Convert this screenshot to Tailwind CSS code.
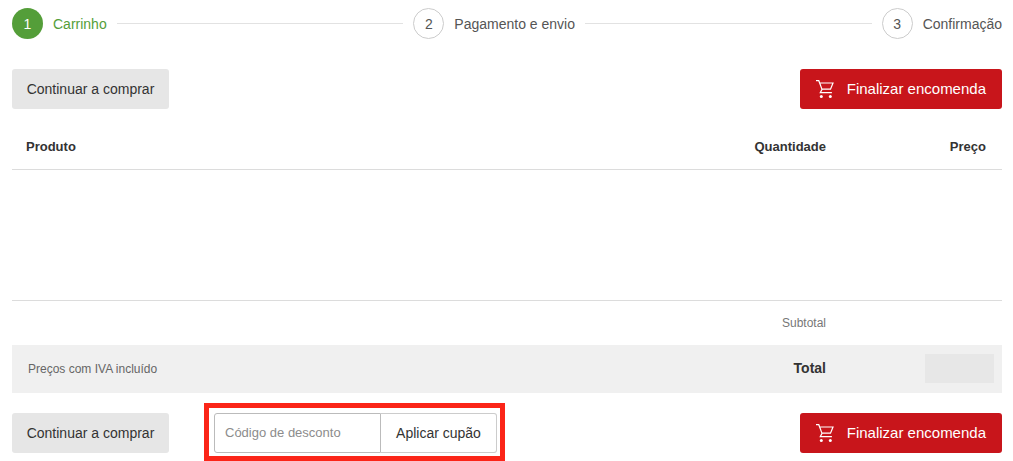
<!DOCTYPE html>
<html lang="pt">
<head>
  <meta charset="UTF-8" />
  <meta name="viewport" content="width=device-width, initial-scale=1.0"/>
  <title>Carrinho</title>
  <script src="https://cdn.jsdelivr.net/npm/@tailwindcss/browser@4"></script>
</head>
<body class="bg-white font-['Liberation_Sans',Arial,sans-serif] text-sm text-[#333333]">
  <main class="w-full pl-3 pr-[11px] pt-2">

    <!-- Steps -->
    <ol class="flex items-center gap-[10px] text-[#555555]">
      <li class="flex items-center gap-[10px] text-[#549e39]">
        <span class="flex size-[31px] items-center justify-center rounded-full bg-[#549e39] text-white">1</span>
        <span>Carrinho</span>
      </li>
      <li class="h-px flex-1 bg-[#e2e2e2]" aria-hidden="true"></li>
      <li class="flex items-center gap-[10px]">
        <span class="flex size-[31px] items-center justify-center rounded-full border border-[#cccccc]">2</span>
        <span>Pagamento e envio</span>
      </li>
      <li class="h-px flex-1 bg-[#e2e2e2]" aria-hidden="true"></li>
      <li class="flex items-center gap-[10px]">
        <span class="flex size-[31px] items-center justify-center rounded-full border border-[#cccccc]">3</span>
        <span>Confirmação</span>
      </li>
    </ol>

    <!-- Top actions -->
    <div class="mt-[30px] flex items-center justify-between">
      <button type="button" class="h-10 w-[157px] rounded-[3px] bg-[#e6e6e6] hover:bg-[#dddddd]">Continuar a comprar</button>
      <button type="button" class="flex h-10 w-[202px] items-center justify-between rounded-[3px] bg-[#c8151b] px-4 text-[15px] text-white hover:bg-[#b01217]">
        <svg class="size-[18px]" viewBox="0 0 18 18" fill="none" stroke="currentColor" stroke-width="1.2">
          <path d="M0 .7h2.8L6 9.4l-1.7 3.2h11.6M3.8 3h13.2l-2.5 6.2H6" />
          <circle cx="5.3" cy="16.4" r="1.5" fill="currentColor" stroke="none" />
          <circle cx="14.3" cy="16.4" r="1.5" fill="currentColor" stroke="none" />
        </svg>
        <span>Finalizar encomenda</span>
      </button>
    </div>

    <!-- Cart -->
    <table class="mt-[14px] w-full border-collapse">
      <thead>
        <tr class="h-[46px] border-b border-[#dcdcdc] text-[13px]">
          <th class="px-[14px] pt-1 text-left">Produto</th>
          <th class="w-40 px-4 pt-1 text-right">Quantidade</th>
          <th class="w-40 px-4 pt-1 text-right">Preço</th>
        </tr>
      </thead>
      <tbody>
        <tr class="h-[131px] border-b border-[#dcdcdc]">
          <td colspan="3"></td>
        </tr>
      </tbody>
      <tfoot>
        <tr class="h-[45px] text-xs text-[#777777]">
          <td></td>
          <td class="px-4 text-right">Subtotal</td>
          <td></td>
        </tr>
        <tr class="h-12 bg-[#f0f0f0]">
          <td class="px-4 text-xs text-[#666666]">Preços com IVA incluído</td>
          <td class="px-4 pb-[2px] text-right font-bold">Total</td>
          <td class="px-2 pb-[2px]"><div class="ml-auto h-[29px] w-[69px] bg-[#e7e7e7]"></div></td>
        </tr>
      </tfoot>
    </table>

    <!-- Bottom actions -->
    <div class="mt-[10px] flex items-start">
      <button type="button" class="mt-[10px] h-10 w-[157px] rounded-[3px] bg-[#e6e6e6] hover:bg-[#dddddd]">Continuar a comprar</button>
      <div class="ml-[35px] border-[5px] border-[#fb2518] pt-[5px] pr-[3px] pb-[3px] pl-[5px]">
        <form class="flex h-10">
          <input type="text" name="coupon" aria-label="Código de desconto" placeholder="Código de desconto" class="w-[167px] rounded-l-[3px] border border-[#bbbbbb] px-[10px] text-[13px] placeholder:text-[#8c8c8c]" />
          <button type="button" class="w-[116px] rounded-r-[3px] border border-l-0 border-[#cccccc] hover:bg-[#f5f5f5]">Aplicar cupão</button>
        </form>
      </div>
      <button type="button" class="mt-[10px] ml-auto flex h-10 w-[202px] items-center justify-between rounded-[3px] bg-[#c8151b] px-4 text-[15px] text-white hover:bg-[#b01217]">
        <svg class="size-[18px]" viewBox="0 0 18 18" fill="none" stroke="currentColor" stroke-width="1.2">
          <path d="M0 .7h2.8L6 9.4l-1.7 3.2h11.6M3.8 3h13.2l-2.5 6.2H6" />
          <circle cx="5.3" cy="16.4" r="1.5" fill="currentColor" stroke="none" />
          <circle cx="14.3" cy="16.4" r="1.5" fill="currentColor" stroke="none" />
        </svg>
        <span>Finalizar encomenda</span>
      </button>
    </div>

  </main>
</body>
</html>
